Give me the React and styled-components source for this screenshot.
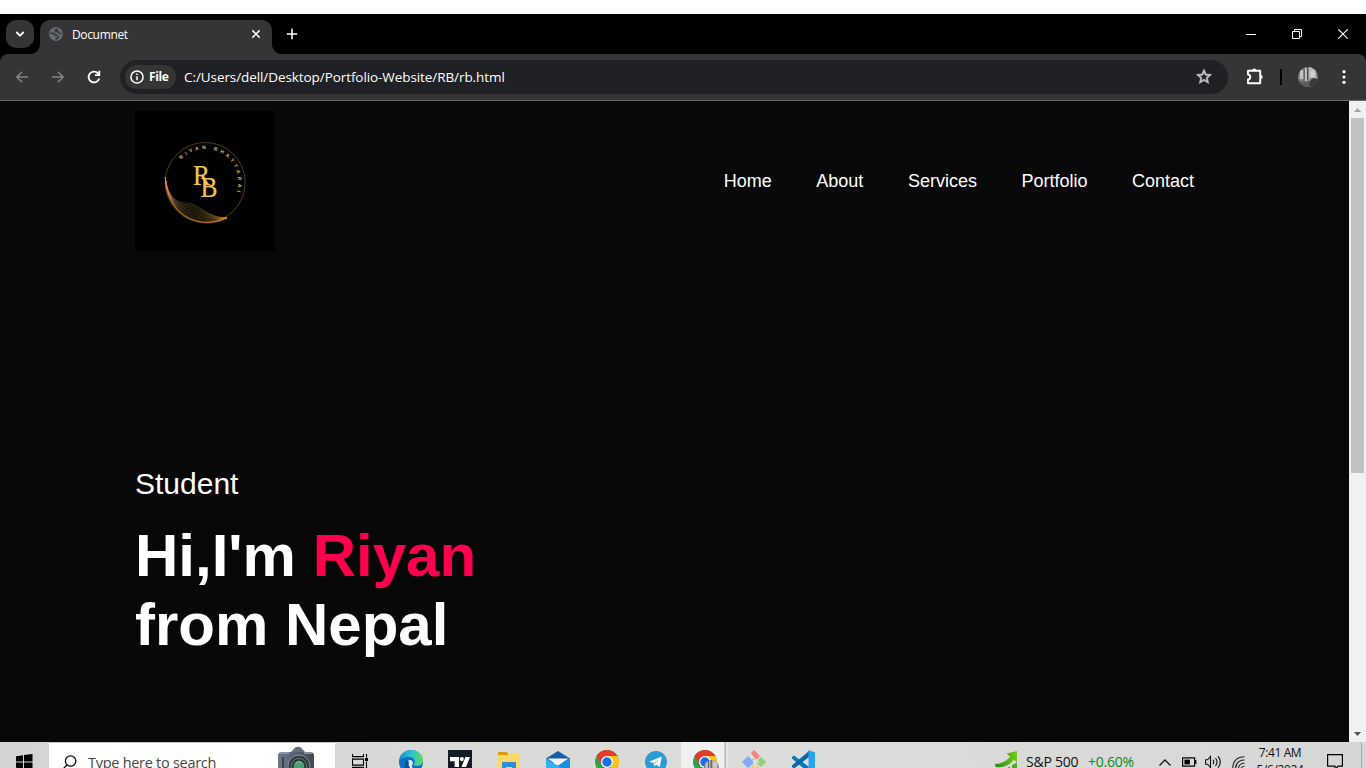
import React from "react";
import styled, { createGlobalStyle } from "styled-components";

const GlobalStyle = createGlobalStyle`
  * { box-sizing: border-box; }
  html, body { margin: 0; padding: 0; background: #fff; overflow: hidden; }
  svg { display: block; flex: none; }
`;

const uiFont = `"Open Sans", "Noto Sans", sans-serif`;
const pageFont = `"Liberation Sans", Arial, sans-serif`;

const Screen = styled.div`
  width: 1366px;
  height: 768px;
  padding-top: 14px;
  overflow: hidden;
  display: flex;
  flex-direction: column;
  background: #fff;
`;

/* ---------- browser chrome ---------- */
const TabStrip = styled.div`
  flex: none;
  height: 40px;
  display: flex;
  background: #000;
  padding-left: 6px;
`;
const TabSearch = styled.div`
  width: 28px;
  height: 28px;
  margin: 6px 6px 0 0;
  border-radius: 10px;
  background: #353535;
  display: grid;
  place-items: center;
`;
const Tab = styled.div`
  position: relative;
  width: 232px;
  height: 34px;
  margin-top: 6px;
  padding: 0 10px 6px 9px;
  border-radius: 10px 10px 0 0;
  background: #353535;
  display: flex;
  align-items: center;
  &::before, &::after {
    content: "";
    position: absolute;
    bottom: 0;
    width: 10px;
    height: 10px;
  }
  &::before { left: -10px; background: radial-gradient(circle at 0 0, #000 9.5px, #353535 10.5px); }
  &::after { right: -10px; background: radial-gradient(circle at 100% 0, #000 9.5px, #353535 10.5px); }
`;
const TabTitle = styled.span`
  flex: 1;
  margin-left: 9px;
  padding-top: 1px;
  font: 12px/18px ${uiFont};
  letter-spacing: -0.35px;
  color: #fff;
`;
const NewTab = styled.div`
  width: 40px;
  display: grid;
  place-items: center;
`;
const WindowControls = styled.div`
  margin-left: auto;
  display: flex;
`;
const WindowButton = styled.div`
  width: 46px;
  height: 40px;
  display: grid;
  place-items: center;
`;
const ToolbarBack = styled.div`
  flex: none;
  background: #000;
`;
const Toolbar = styled.div`
  height: 47px;
  border-radius: 8px 8px 0 0;
  background: #353535;
  border-bottom: 1px solid #6a6a6a;
  display: flex;
  align-items: center;
  padding-left: 4px;
`;
const ToolButton = styled.div`
  width: ${(p) => p.$w || 36}px;
  height: 34px;
  flex: none;
  display: grid;
  place-items: center;
`;
const AddressBar = styled.div`
  width: 1108px;
  height: 34px;
  margin-left: 8px;
  padding: 0 15px 0 5px;
  border-radius: 17px;
  background: #202125;
  display: flex;
  align-items: center;
  flex: none;
`;
const FileChip = styled.div`
  width: 51px;
  height: 24px;
  border-radius: 12px;
  background: #353535;
  display: flex;
  align-items: center;
  padding-left: 5px;
  gap: 5px;
  font: 700 12px/24px ${uiFont};
  letter-spacing: -0.35px;
  color: #fff;
`;
const Url = styled.span`
  flex: 1;
  margin-left: 8px;
  font: 13.5px/20px ${uiFont};
  letter-spacing: -0.08px;
  color: #fff;
`;
const Divider = styled.div`
  width: 2px;
  height: 16px;
  margin-left: -2px;
  background: #000;
`;

/* ---------- page ---------- */
const Viewport = styled.div`
  flex: none;
  height: 641px;
  display: flex;
`;
const Page = styled.main`
  width: 1349px;
  padding: 10px 135px;
  background: #080808;
  color: #fff;
  font-family: ${pageFont};
`;
const Nav = styled.nav`
  display: flex;
  align-items: center;
  justify-content: space-between;
`;
const Menu = styled.ul`
  display: flex;
  gap: 44.5px;
  list-style: none;
  margin: 0 20px 0 0;
  padding: 0;
  font-size: 18px;
  line-height: 21px;
`;
const HeaderText = styled.header`
  margin-top: 215px;
  font-size: 30px;
  line-height: 35px;
`;
const Role = styled.p`
  margin: 0;
`;
const Headline = styled.h1`
  margin: 20px 0 0;
  font-size: 60px;
  line-height: 69px;
  font-weight: 700;
`;
const Name = styled.span`
  color: #ff004f;
`;
const Scrollbar = styled.div`
  width: 17px;
  background: #f1f1f1;
  display: flex;
  flex-direction: column;
  align-items: center;
`;
const ScrollArrow = styled.div`
  height: 17px;
  display: grid;
  place-items: center;
`;
const Thumb = styled.div`
  width: 13px;
  height: 355px;
  margin-bottom: auto;
  background: #c1c1c1;
`;

/* ---------- taskbar ---------- */
const Taskbar = styled.div`
  flex: none;
  height: 40px;
  display: flex;
  background: linear-gradient(90deg, #d3d4d3, #d9d9d8 35%, #dcdcda 62%, #d5d7d6);
  font-family: ${uiFont};
  color: #111;
`;
const TaskCell = styled.div`
  width: ${(p) => p.$w || 49}px;
  flex: none;
  display: grid;
  place-items: center;
`;
const ActiveCell = styled(TaskCell)`
  background: linear-gradient(90deg, transparent 1px, #f0f0f0 1px, #f0f0f0 44px, #b9b9b9 45px, #b9b9b9 46px, #e6e6e6 46px, #e6e6e6 48px, transparent 48px);
`;
const SearchBox = styled.div`
  width: 286px;
  flex: none;
  background: #fff;
  border-top: 1px solid #c3c3c3;
  display: flex;
  align-items: center;
  padding: 0 20px 0 12px;
`;
const SearchText = styled.span`
  flex: 1;
  margin-left: 11px;
  font-size: 14.5px;
  line-height: 20px;
  letter-spacing: -0.28px;
  color: #444;
`;
const Tray = styled.div`
  margin-left: auto;
  display: flex;
  align-items: center;
`;
const Ticker = styled.div`
  display: flex;
  align-items: center;
  width: 158px;
  font-size: 14px;
  line-height: 20px;
  letter-spacing: -0.25px;
  white-space: nowrap;
`;
const Symbol = styled.span`
  width: 62px;
  margin-left: 8px;
`;
const Change = styled.span`
  color: #0f8a17;
`;
const Clock = styled.div`
  width: 56px;
  height: 40px;
  padding-top: 2px;
  text-align: center;
  font-size: 12px;
  line-height: 17px;
  letter-spacing: -0.4px;
  white-space: nowrap;
`;
const ShowDesktop = styled.div`
  width: 5px;
  height: 40px;
  border-left: 1px solid #aaa;
`;

/* ---------- drawings ---------- */
const waves = Array.from({ length: 12 }, (_, i) => {
  const t = i / 11;
  const m = (a, b) => (a + (b - a) * t).toFixed(2);
  return `M30.3 66 C${m(31, 32)} ${m(86, 84)} ${m(42, 40)} ${m(104, 92)} ${m(56, 52)} ${m(109, 92)} S${m(80, 72)} ${m(113, 107)} 92 107`;
});

const Logo = () => (
  <svg width="140" height="140" viewBox="0 0 140 140">
    <defs>
      <path id="ring" d="M46.2 48.4 A33 33 0 0 1 101.2 82.4" />
      <linearGradient id="gold" gradientUnits="userSpaceOnUse" x1="30" y1="66" x2="92" y2="107">
        <stop offset="0" stopColor="#f08a45" />
        <stop offset=".3" stopColor="#b99255" />
        <stop offset=".6" stopColor="#8f7840" />
        <stop offset="1" stopColor="#e68a25" />
      </linearGradient>
    </defs>
    <rect width="140" height="140" fill="#000" />
    <circle cx="70.2" cy="71.5" r="40" fill="none" stroke="#7a5122" strokeWidth=".7" />
    <path d="M30.3 68 C31 94 50 112 74 111.4 Q84 111.2 92 106.500" fill="none" stroke="#d9772c" strokeWidth=".9" />
    {waves.map((d) => (
      <path key={d} d={d} fill="none" stroke="url(#gold)" strokeWidth=".4" opacity=".8" />
    ))}
    <text fontFamily="Liberation Sans, sans-serif" fontWeight="700" fontSize="4.9" fill="#e6c05c">
      <textPath href="#ring" textLength="88">RIYAN BHATTARAI</textPath>
    </text>
    <g fontFamily="Liberation Serif, serif" fill="#efc55c" stroke="#efc55c" strokeWidth=".2">
      <text x="58" y="74.300" fontSize="29" textLength="17" lengthAdjust="spacingAndGlyphs">R</text>
      <text x="65.400" y="86" fontSize="30" textLength="17" lengthAdjust="spacingAndGlyphs">B</text>
    </g>
  </svg>
);

const Line = ({ w = 16, h = w, d, c = "#fff", s = 1.6, fill = "none" }) => (
  <svg width={w} height={h} viewBox={`0 0 ${w} ${h}`}>
    <path d={d} fill={fill} stroke={c} strokeWidth={s} />
  </svg>
);

const Globe = () => (
  <svg width="14" height="14" viewBox="0 0 14 14">
    <circle cx="7" cy="7" r="7" fill="#656970" />
    <path d="M1.2 6.3h3.2c1.3 0 1.5.9 1.5 1.8h1.4c1.2 0 1.8.8 1.8 1.8 0 1.1-.9 1.4-1.8 1.4v1.500M8.200 1.200v1.500H6.500v1.800h1.800c1.400 0 1.200 1.900 2.700 1.900h1.600" fill="none" stroke="#353535" strokeWidth="1.4" />
  </svg>
);

const Info = () => (
  <svg width="14" height="14" viewBox="0 0 14 14">
    <circle cx="7" cy="7" r="6.1" fill="none" stroke="#fff" strokeWidth="1.5" />
    <path d="M7 6.2v4M7 3.5v1.5" stroke="#fff" strokeWidth="1.5" />
  </svg>
);

const Reload = () => (
  <svg width="14" height="14" viewBox="0 0 14 14">
    <path d="M12.2 8.5A5.4 5.4 0 1 1 11 3.4L12.3 5" fill="none" stroke="#fff" strokeWidth="1.8" />
    <path d="M13.2 .8V6H8V4.2h3.4V.8Z" fill="#fff" />
  </svg>
);

const Star = () => (
  <svg width="18" height="18" viewBox="0 0 24 24">
    <path d="M22 8.700l-7.200-.6L12 1.500 9.200 8.100 2 8.700l5.500 4.800L5.800 20.500 12 16.800 18.200 20.500l-1.600-7L22 8.700zM12 14.900l-3.800 2.300 1-4.300-3.300-2.900 4.400-.4L12 5.600l1.700 4 4.400.4-3.300 2.900 1 4.300L12 14.900z" fill="#c7c7c7" stroke="#c7c7c7" strokeWidth=".9" />
  </svg>
);

const Puzzle = () => (
  <svg width="18" height="18" viewBox="0 0 18 18">
    <path d="M2 2.8h12.2v12.4H2v-3.7c3-.2 3-4.8 0-5Z" fill="none" stroke="#fff" strokeWidth="1.9" strokeLinejoin="round" />
    <path d="M6.2 2.4a2 2 0 0 1 4 0ZM14.600 7a2 2 0 0 1 0 4Z" fill="#fff" />
  </svg>
);

const Avatar = ({ size = 20 }) => (
  <svg width={size} height={size} viewBox="0 0 20 20">
    <defs>
      <clipPath id={`face${size}`}><circle cx="10" cy="10" r="10" /></clipPath>
    </defs>
    <g clipPath={`url(#face${size})`}>
      <rect width="20" height="20" fill="#858585" />
      <path d="M2 3h4v9H2zM7 1h2v13H7z" fill="#c2c2c2" />
      <path d="M11 0h7v12l-5-2-2 3z" fill="#b9b9b9" />
      <path d="M9.5 0v13M6 2v12" stroke="#4b4b4b" />
      <path d="M12 14l3-3 5 1v8H9z" fill="#3a3a3a" />
      <path d="M1 13l5 2 5-1 1 6H5z" fill="#5d5d5d" />
      <path d="M12 5l3-2 2 3-1 4-3 1z" fill="#d1d1d1" />
    </g>
  </svg>
);

const Camera = () => (
  <svg width="38" height="36" viewBox="0 0 38 36">
    <defs>
      <linearGradient id="body" x1="0" x2="1"><stop offset="0" stopColor="#6e7886" /><stop offset=".5" stopColor="#56606c" /><stop offset="1" stopColor="#3f4954" /></linearGradient>
    </defs>
    <path d="M14 7l4-4.500q3-1.500 6 0L28 7z" fill="#66717d" />
    <path d="M1 11q0-4 4-4h28q4 0 4 4v20q0 3-4 3H5q-4 0-4-3Z" fill="url(#body)" />
    <path d="M3 8h9M27 8h8" stroke="#96a0aa" strokeWidth="1.5" />
    <circle cx="22" cy="21" r="11" fill="#343c46" stroke="#87919a" />
    <circle cx="22" cy="21" r="7.5" fill="#22372f" stroke="#697681" />
    <circle cx="22" cy="21" r="5.3" fill="#4f9c74" />
    <path d="M19 18q3-3 6 0" stroke="#88c7a3" fill="none" />
    <path d="M6 12v16" stroke="#3b4550" strokeWidth="2" />
  </svg>
);

const Windows = () => (
  <svg width="17" height="16" viewBox="0 0 17 16">
    <path d="M0 2.3 7 1.3V7.5H0ZM8 1.1 16.5 0V7.5H8ZM0 8.5H7V14.7L0 13.7ZM8 8.5h8.5V16L8 14.9Z" fill="#000" />
  </svg>
);

const TaskView = () => (
  <svg width="18" height="16" viewBox="0 0 18 16">
    <path d="M.5 0v2.600h11V0M.5 16v-2.600h11V16M.5 5.100h11v6H.5ZM14.500 0v3.500M14.500 7.500V16" fill="none" stroke="#000" strokeWidth="1.100" />
    <path d="M13 4h3v3h-3z" fill="#000" />
  </svg>
);

const Edge = () => (
  <svg width="24" height="24" viewBox="0 0 24 24">
    <defs>
      <linearGradient id="edgeTop"><stop offset="0" stopColor="#168fd0" /><stop offset=".5" stopColor="#2dc0dc" /><stop offset="1" stopColor="#67db54" /></linearGradient>
    </defs>
    <circle cx="12" cy="12" r="12" fill="#1270c4" />
    <path d="M0 11C1 4 6 0 12 0c7 0 12 5 12 10 0 4-3 6-6 6-3 0-4-1-3-2 2-3 0-7-5-7C5 7 1 9 0 11Z" fill="url(#edgeTop)" />
    <path d="M11 10c-5 1-5 7-1 10 4 3 8 2 11 0-5 1-8-1-8-4 0-2 1-2 1-3s-1-3-3-3Z" fill="#dcecf2" />
    <path d="M8 10c-4 4-3 11 3 14 4 0 8-2 10-5-6 3-13-1-11-7Z" fill="#0c55a0" />
  </svg>
);

const TradingView = () => (
  <svg width="24" height="24" viewBox="0 0 24 24">
    <path d="M0 0h24v24H0z" fill="#131b27" />
    <path d="M2 7h9v10H6.600V11.200H2ZM17.400 7H22l-4 10h-4.500Z" fill="#fff" />
    <circle cx="13.8" cy="9.100" r="2.100" fill="#fff" />
  </svg>
);

const Folder = () => (
  <svg width="22" height="20" viewBox="0 0 22 20">
    <path d="M0 1q0-1 1-1h8l1.500 3H0Z" fill="#dc9c0c" />
    <path d="M0 3h10l2-1.500h10V19H0Z" fill="#ffd766" />
    <path d="M4 10h14v10h-4v-5H8v5H4Z" fill="#2e8ddc" />
  </svg>
);

const Mail = () => (
  <svg width="24" height="22" viewBox="0 0 24 22">
    <path d="M0 7.500 12 0l12 7.500V12H0Z" fill="#1260ab" />
    <path d="M1.500 7.500h21L13 14h-2Z" fill="#f2f3f5" />
    <path d="M0 7.500 12 15 24 7.500V22H0Z" fill="#32b2ee" />
    <path d="M24 7.500V22L8 12.500l4 2Z" fill="#1592de" />
  </svg>
);

const Chrome = () => (
  <svg width="24" height="24" viewBox="0 0 24 24">
    <circle cx="12" cy="12" r="12" fill="#34a047" />
    <path d="M1.600 6A12 12 0 0 1 22.400 6H12L6.800 15Z" fill="#e33b2e" />
    <path d="M22.400 6A12 12 0 0 1 12 24L17.200 15 12 6Z" fill="#fcc31e" />
    <circle cx="12" cy="12" r="6" fill="#fff" />
    <circle cx="12" cy="12" r="4.700" fill="#1b70e8" />
  </svg>
);

const ProfileBadge = styled.div`
  position: absolute;
  left: 11px;
  top: 10px;
`;
const IconStack = styled.div`
  position: relative;
`;

const Telegram = () => (
  <svg width="22" height="22" viewBox="0 0 22 22">
    <circle cx="11" cy="11" r="11" fill="#2a9bd5" />
    <path d="M4 10.700 16.800 5.600 14.700 16.200 11 13.600 9 15.500 8.700 12.100Z" fill="#fff" />
    <path d="M8.700 12.100 14.500 7.600 9.800 13Z" fill="#a9cde5" />
  </svg>
);

const Git = () => (
  <svg width="24" height="24" viewBox="0 0 24 24">
    <path d="M9 3l3-3 6 6-4 4h-3V6.500Z" fill="#fa8080" />
    <path d="M0 12 6 6l5 5v3l-5 4Z" fill="#83a9fa" />
    <path d="M19 7l5 5-5 5-4-3v-3Z" fill="#8ed07e" />
    <path d="M12 14l6 4-6 6-5-5Z" fill="#f3cd66" />
    <path d="M9 5l4 4v9M13 9l4 4" fill="none" stroke="#e2e2e2" strokeWidth="1.3" />
  </svg>
);

const VSCode = () => (
  <svg width="24" height="24" viewBox="0 0 24 24">
    <path d="M1 7l2-1.500L18 17v6L1 8.500Z" fill="#0878bd" />
    <path d="M1 17l2 1.500L18 7V1L1 15.500Z" fill="#0867a9" />
    <path d="M17.500 0 24 2.500v19L17.500 24Z" fill="#24a5ee" />
  </svg>
);

const Stock = () => (
  <svg width="23" height="23" viewBox="0 0 23 23">
    <defs>
      <linearGradient id="up"><stop offset="0" stopColor="#298b25" /><stop offset="1" stopColor="#72c914" /></linearGradient>
    </defs>
    <path d="M0 13Q9 13 15.200 5.800L11.500 2.600 22 0V11.500L19 8.800Q11 18 .5 16Z" fill="url(#up)" />
    <path d="M11.500 17.500l3.500-2.300V23h-3.500ZM17 14l5-2.500V23h-5Z" fill="#55aa20" />
  </svg>
);

const Battery = () => (
  <svg width="15" height="10" viewBox="0 0 15 10">
    <path d="M.6.8h12v8.400H.6ZM13.800 3v4" fill="none" stroke="#000" strokeWidth="1.2" />
    <path d="M2.400 2.600h5.500v4.800H2.400z" fill="#000" />
  </svg>
);

const navItems = ["Home", "About", "Services", "Portfolio", "Contact"];
const pinned = [Edge, TradingView, Folder, Mail, Chrome, Telegram];

export default function App() {
  return (
    <Screen>
      <GlobalStyle />
      <TabStrip>
        <TabSearch><Line w={10} h={10} d="M1.300 3 5 6.700 8.700 3" s={1.9} /></TabSearch>
        <Tab>
          <Globe />
          <TabTitle>Documnet</TabTitle>
          <Line w={12} d="M2.400 2.400l7.200 7.200M9.600 2.400 2.400 9.600" s={1.5} />
        </Tab>
        <NewTab><Line w={12} d="M6 .8v10.400M.8 6h10.400" s={1.6} /></NewTab>
        <WindowControls>
          <WindowButton><Line w={10} d="M0 5.500h10" s={1} /></WindowButton>
          <WindowButton><Line w={10} d="M.5 2.500h7v7h-7ZM2.500 2.500v-2h7v7h-2" s={1} /></WindowButton>
          <WindowButton><Line w={10} d="M.3.300l9.400 9.400M9.700.300l-9.400 9.400" s={1.1} /></WindowButton>
        </WindowControls>
      </TabStrip>
      <ToolbarBack>
        <Toolbar>
          <ToolButton><Line w={12} d="M6.200.7.9 6l5.300 5.300M1 6h11" c="#858585" s={1.5} /></ToolButton>
          <ToolButton><Line w={12} d="M5.800.7 11.100 6l-5.300 5.300M11 6H0" c="#858585" s={1.5} /></ToolButton>
          <ToolButton><Reload /></ToolButton>
          <AddressBar>
            <FileChip><Info />File</FileChip>
            <Url>C:/Users/dell/Desktop/Portfolio-Website/RB/rb.html</Url>
            <Star />
          </AddressBar>
          <ToolButton $w={54}><Puzzle /></ToolButton>
          <Divider />
          <ToolButton $w={52}><Avatar /></ToolButton>
          <ToolButton $w={20}>
            <svg width="4" height="14" viewBox="0 0 4 14" fill="#fff">
              <circle cx="2" cy="1.700" r="1.600" /><circle cx="2" cy="7" r="1.600" /><circle cx="2" cy="12.300" r="1.600" />
            </svg>
          </ToolButton>
        </Toolbar>
      </ToolbarBack>

      <Viewport>
        <Page>
          <Nav>
            <Logo />
            <Menu>{navItems.map((n) => <li key={n}>{n}</li>)}</Menu>
          </Nav>
          <HeaderText>
            <Role>Student</Role>
            <Headline>Hi,I'm <Name>Riyan</Name><br />from Nepal</Headline>
          </HeaderText>
        </Page>
        <Scrollbar>
          <ScrollArrow><Line w={7} h={4} d="M0 4 3.500 0 7 4Z" fill="#a3a3a3" s={0} /></ScrollArrow>
          <Thumb />
          <ScrollArrow><Line w={7} h={4} d="M0 0 3.500 4 7 0Z" fill="#505050" s={0} /></ScrollArrow>
        </Scrollbar>
      </Viewport>

      <Taskbar>
        <TaskCell><Windows /></TaskCell>
        <SearchBox>
          <Line w={16} d="M5.800 10.200.8 15.200M14.800 6a5.200 5.200 0 1 1-10.400 0 5.200 5.200 0 0 1 10.400 0Z" c="#111" s={1.3} />
          <SearchText>Type here to search</SearchText>
          <Camera />
        </SearchBox>
        <TaskCell $w={51}><TaskView /></TaskCell>
        {pinned.map((Icon, i) => <TaskCell key={i}><Icon /></TaskCell>)}
        <ActiveCell>
          <IconStack>
            <Chrome />
            <ProfileBadge><Avatar size={15} /></ProfileBadge>
          </IconStack>
        </ActiveCell>
        <TaskCell><Git /></TaskCell>
        <TaskCell><VSCode /></TaskCell>
        <Tray>
          <Ticker>
            <Stock />
            <Symbol>S&amp;P 500</Symbol>
            <Change>+0.60%</Change>
          </Ticker>
          <TaskCell $w={24}><Line w={12} h={7} d="M.5 6.500 6 1l5.500 5.500" c="#111" s={1.3} /></TaskCell>
          <TaskCell $w={24}><Battery /></TaskCell>
          <TaskCell $w={24}><Line w={17} h={14} d="M.6 4.800h2L5.500 1.500v11L2.600 9.200h-2ZM8 4.800q1.500 2.200 0 4.400M10.500 3q3 4 0 8M13 1.200q4.600 5.800 0 11.600" c="#111" s={1.1} /></TaskCell>
          <TaskCell $w={27}><Line w={13} h={13} d="M.7 12.500Q1 1 12.500.8M3.500 12.500Q4 4.200 12.500 4M6.300 12.500Q7 7.300 12.500 7.200M9 12.500q.5-2 3.500-2.200" c="#222" s={1.1} /></TaskCell>
          <Clock>7:41 AM<br />5/6/2024</Clock>
          <TaskCell $w={53}><Line w={16} h={17} d="M.6.6h14.800v11.600H11L8 15.500V12.200H.6Z" c="#000" s={1.2} /></TaskCell>
          <ShowDesktop />
        </Tray>
      </Taskbar>
    </Screen>
  );
}
